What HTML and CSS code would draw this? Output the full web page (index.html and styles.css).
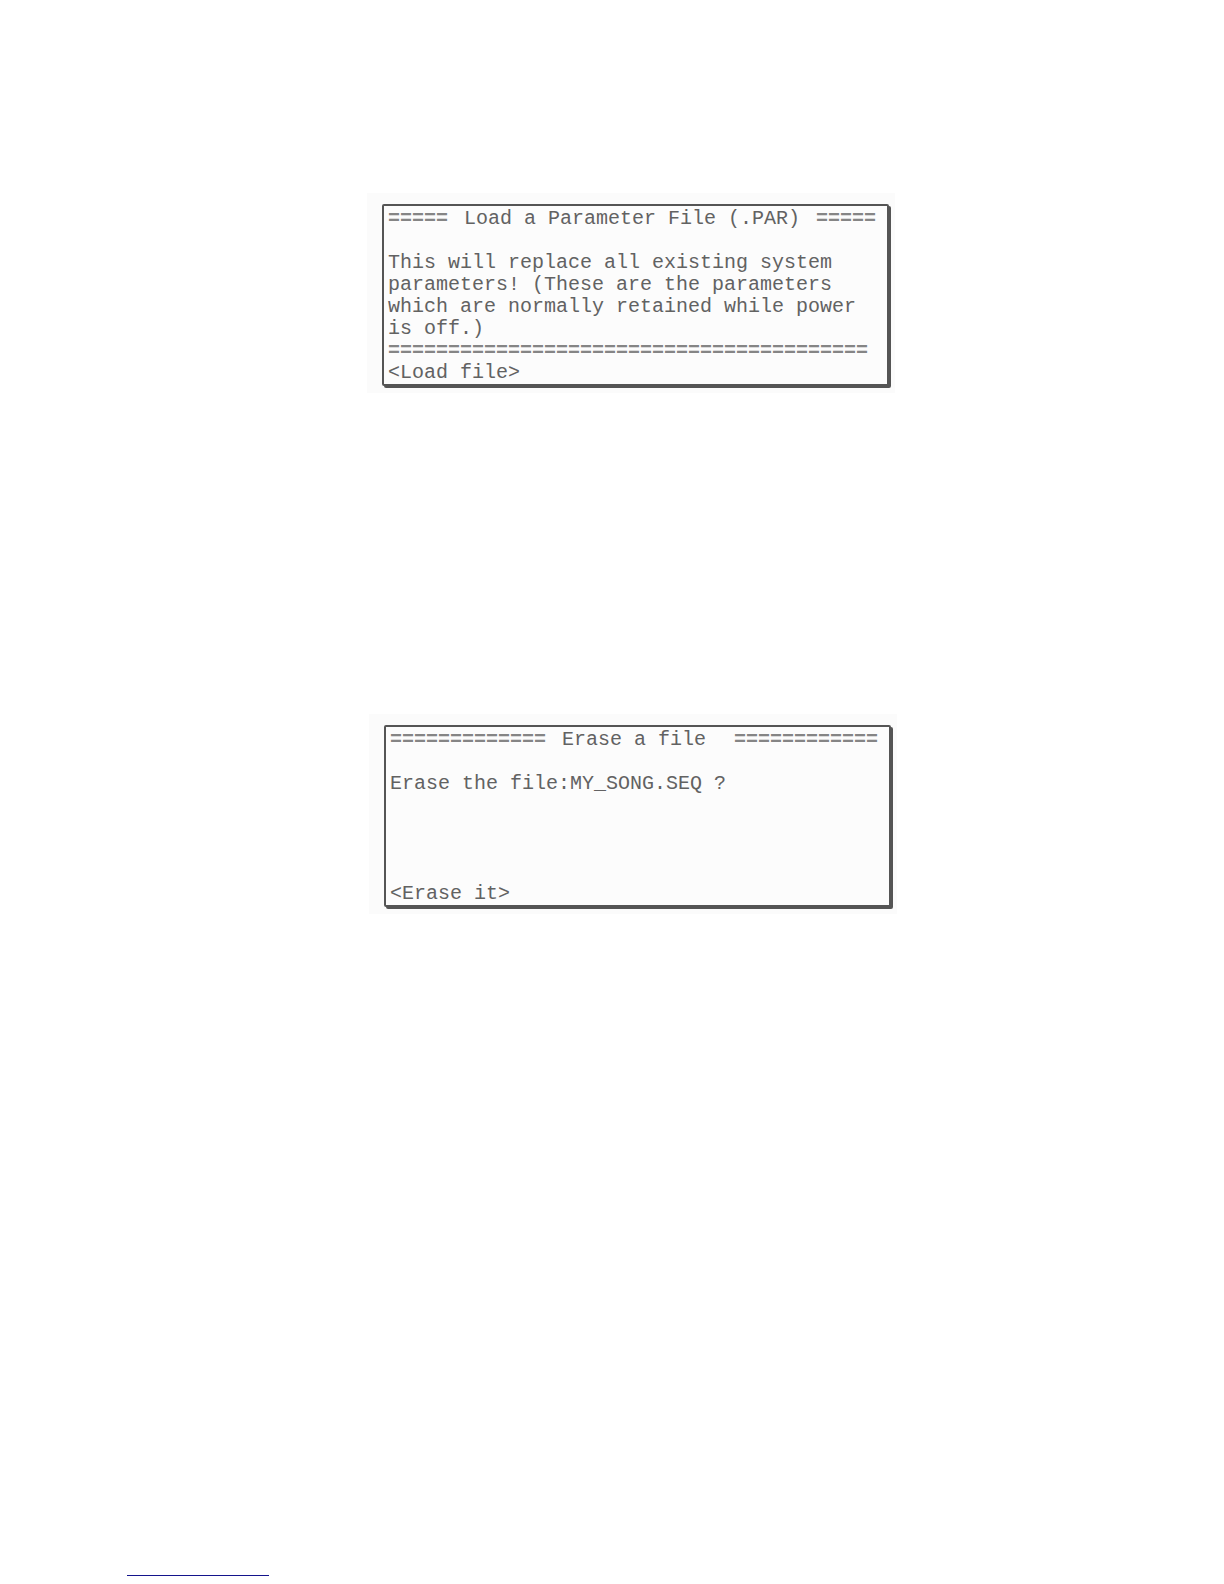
FILE: index.html
```html
<!DOCTYPE html>
<html lang="en">
<head>
<meta charset="utf-8">
<title>Disk screens</title>
<link rel="stylesheet" href="styles.css">
</head>
<body>
<main class="page">
  <section class="plate">
    <div class="screen">
      <h2 class="title"><span class="rule">=====</span><span>Load a Parameter File (.PAR)</span><span class="rule">=====</span></h2>
      <p class="message">This will replace all existing system<br>parameters! (These are the parameters<br>which are normally retained while power<br>is off.)</p>
      <div class="rule">========================================</div>
      <button class="softkey" type="button">&lt;Load file&gt;</button>
    </div>
  </section>
  <section class="plate plate-erase">
    <div class="screen">
      <h2 class="title"><span class="rule">=============</span><span>Erase a file&nbsp;</span><span class="rule">============</span></h2>
      <p class="message">Erase the file:MY_SONG.SEQ ?</p>
      <button class="softkey" type="button">&lt;Erase it&gt;</button>
    </div>
  </section>
  <hr class="footer-line">
</main>
</body>
</html>
```
FILE: styles.css
```css
* {
  box-sizing: border-box;
}

body {
  margin: 0;
  background: #fff;
  color: #626262;
  font: 20px/22px "Liberation Mono", "Courier New", monospace;
}

.page {
  display: flex;
  flex-direction: column;
  align-items: flex-start;
  min-height: 100vh;
  padding: 193px 16px 8px calc(50% - 245px);
}

.plate {
  width: 100%;
  max-width: 528px;
  padding: 11px 6px 7px 15px;
  background: #fbfbfb;
}

.plate-erase {
  margin: 321px 0 0 2px;
}

.screen {
  display: flex;
  flex-direction: column;
  min-height: 182px;
  padding: 2px 11px 0 4px;
  border: 2px solid #555;
  border-radius: 2px;
  box-shadow: 2px 2px 0 #555;
  background: #fcfcfc;
}

.title {
  display: flex;
  justify-content: space-between;
  margin: 0 0 22px;
  font-size: 20px;
  font-weight: 400;
  white-space: pre;
}

.message {
  margin: 0;
}

.rule {
  color: #858585;
  font-weight: 700;
}

.softkey {
  align-self: flex-start;
  margin: auto 0 0;
  padding: 0;
  border: 0;
  background: none;
  color: inherit;
  font: inherit;
}

.footer-line {
  width: 142px;
  margin: auto 0 0 -240px;
  border: 0;
  border-top: 1px solid #14148c;
}
```
